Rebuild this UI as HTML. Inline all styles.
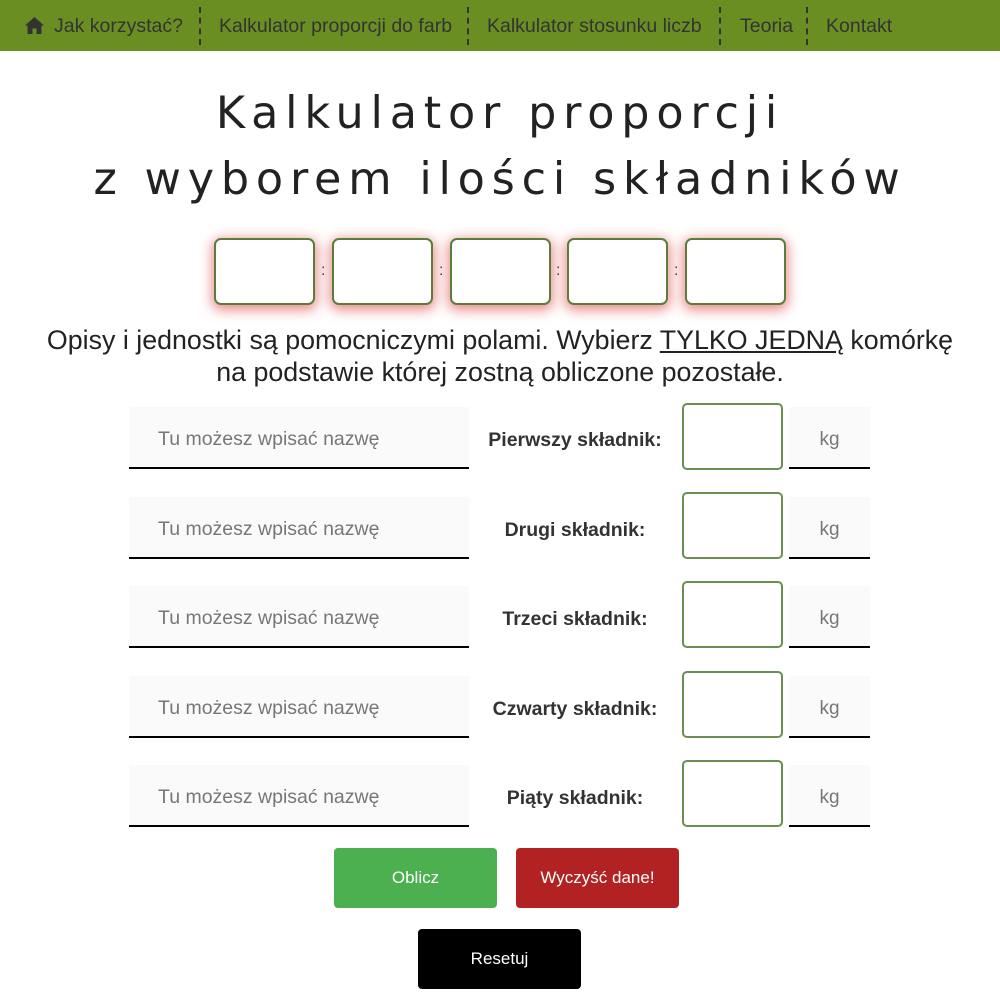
<!DOCTYPE html>
<html><head><meta charset="utf-8"><style>
*{box-sizing:border-box;margin:0;padding:0}
body{width:1000px;height:1000px;background:#fff;font-family:"Liberation Sans",sans-serif;position:relative;overflow:hidden}
.nav{position:absolute;left:0;top:0;width:1000px;height:51px;background:#6b8e23}
.nav span{position:absolute;top:15px;font-size:19.5px;color:#333;white-space:nowrap}
.sep{position:absolute;top:7px;height:38px;border-left:2px dashed #333}
.t{position:absolute;left:0;width:1000px;text-align:center;font-family:"DejaVu Sans",sans-serif;font-weight:normal;font-size:44.5px;letter-spacing:6.8px;color:#222;white-space:nowrap}
.rb{position:absolute;top:238px;width:101px;height:67px;border:2px solid #5a7d3a;border-radius:7px;background:#fff;box-shadow:0 3px 12px 2px rgba(220,60,60,.6)}
.col{position:absolute;top:262px;font-size:16px;color:#446}
.p{position:absolute;left:0;width:1000px;text-align:center;font-size:26.8px;color:#222;line-height:32px;white-space:nowrap}
.nm{position:absolute;left:129px;width:340px;height:62px;background:#fafafa;border-bottom:2px solid #000;font-size:19.5px;color:#777;padding:21px 0 0 29px}
.lb{position:absolute;left:470px;width:210px;text-align:center;font-size:19.5px;font-weight:bold;color:#333}
.bx{position:absolute;left:682px;width:101px;height:67px;border:2px solid #6b8e53;border-radius:5px;background:#fff}
.kg{position:absolute;left:789px;width:81px;height:62px;background:#fafafa;border-bottom:2px solid #000;font-size:19px;color:#777;text-align:center;padding-top:22px}
.btn{position:absolute;width:163px;height:60px;border-radius:4px;color:#fff;font-size:17px;text-align:center;line-height:60px}
</style></head><body>
<div class="nav">
<svg style="position:absolute;left:25px;top:17px" width="19" height="17" viewBox="0 0 19 17"><path d="M9.5 0L0 8.5h2.5V17h5v-5.5h4V17h5V8.5H19z" fill="#333"/></svg>
<span style="left:54px">Jak korzystać?</span><div class="sep" style="left:199px"></div>
<span style="left:219px">Kalkulator proporcji do farb</span><div class="sep" style="left:467px"></div>
<span style="left:487px">Kalkulator stosunku liczb</span><div class="sep" style="left:719px"></div>
<span style="left:740px">Teoria</span><div class="sep" style="left:806px"></div>
<span style="left:826px">Kontakt</span>
</div>
<div class="t" style="top:88px">Kalkulator proporcji</div>
<div class="t" style="top:154px">z wyborem ilości składników</div>
<div class="rb" style="left:214px"></div><div class="col" style="left:321px">:</div>
<div class="rb" style="left:332px"></div><div class="col" style="left:439px">:</div>
<div class="rb" style="left:450px"></div><div class="col" style="left:556px">:</div>
<div class="rb" style="left:567px"></div><div class="col" style="left:674px">:</div>
<div class="rb" style="left:685px"></div>
<div class="p" style="top:324px">Opisy i jednostki są pomocniczymi polami. Wybierz <u>TYLKO JEDNĄ</u> komórkę<br>na podstawie której zostną obliczone pozostałe.</div>

<div class="nm" style="top:407px">Tu możesz wpisać nazwę</div><div class="lb" style="top:429px">Pierwszy składnik:</div><div class="bx" style="top:403px"></div><div class="kg" style="top:407px">kg</div>
<div class="nm" style="top:497px">Tu możesz wpisać nazwę</div><div class="lb" style="top:519px">Drugi składnik:</div><div class="bx" style="top:492px"></div><div class="kg" style="top:497px">kg</div>
<div class="nm" style="top:586px">Tu możesz wpisać nazwę</div><div class="lb" style="top:608px">Trzeci składnik:</div><div class="bx" style="top:581px"></div><div class="kg" style="top:586px">kg</div>
<div class="nm" style="top:676px">Tu możesz wpisać nazwę</div><div class="lb" style="top:698px">Czwarty składnik:</div><div class="bx" style="top:671px"></div><div class="kg" style="top:676px">kg</div>
<div class="nm" style="top:765px">Tu możesz wpisać nazwę</div><div class="lb" style="top:787px">Piąty składnik:</div><div class="bx" style="top:760px"></div><div class="kg" style="top:765px">kg</div>

<div class="btn" style="left:334px;top:848px;background:#4caf50">Oblicz</div>
<div class="btn" style="left:516px;top:848px;background:#b22222">Wyczyść dane!</div>
<div class="btn" style="left:418px;top:929px;background:#000">Resetuj</div>
</body></html>
